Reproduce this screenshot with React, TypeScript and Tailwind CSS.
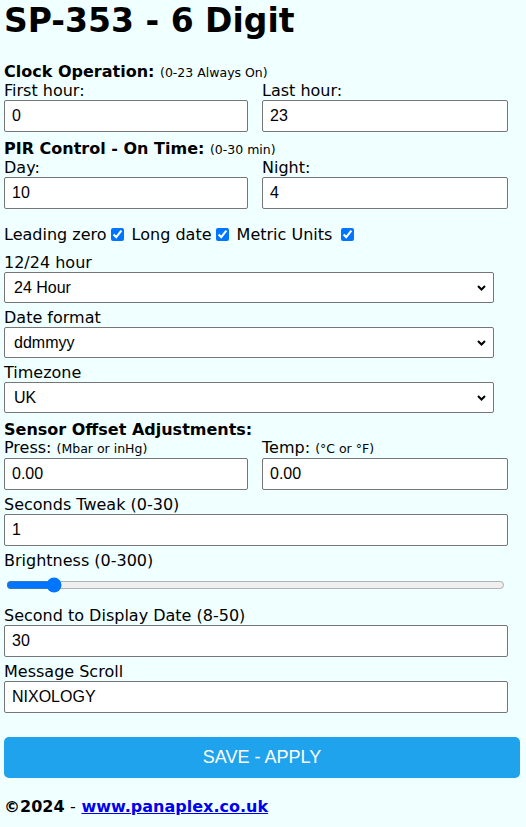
import React, { useState } from 'react';

const label = "block text-[16px] leading-[18px] text-black";
const heading = "block text-[16px] leading-[19px] font-bold text-black";
const small = "text-[12.5px] font-normal";
const inputCls =
  "block w-full h-[32px] border border-[#767676] rounded-[2px] bg-white px-[7px] text-[16px] text-black outline-none [font-family:'Liberation_Sans',Arial,sans-serif]";
const check = "m-[3px_3px_3px_4px] w-[13px] h-[13px] align-[-1px]";

const Field: React.FC<{ title: React.ReactNode; value: string; className?: string }> = ({ title, value, className }) => (
  <div className={className}>
    <label className={label}>{title}</label>
    <input type="text" defaultValue={value} className={inputCls} />
  </div>
);

const Select: React.FC<{ title: string; value: string; options: string[]; className?: string }> = ({ title, value, options, className }) => (
  <div className={className}>
    <label className={label}>{title}</label>
    <div className="relative w-[490px]">
      <select
        defaultValue={value}
        className="block w-full h-[31px] appearance-none border border-[#767676] rounded-[2px] bg-white pl-[9px] text-[16px] text-black outline-none [font-family:'Liberation_Sans',Arial,sans-serif]"
      >
        {options.map((o) => (
          <option key={o} value={o}>{o}</option>
        ))}
      </select>
      <svg className="absolute right-[8px] top-[13px] pointer-events-none" width="9" height="6" viewBox="0 0 9 6">
        <path d="M1 1 L4.5 4.5 L8 1" fill="none" stroke="#000" strokeWidth="2" />
      </svg>
    </div>
  </div>
);

export default function App() {
  const [brightness, setBrightness] = useState(25);

  return (
    <div className="min-h-[827px] bg-[#f0ffff] px-[4px] [font-family:'DejaVu_Sans',Verdana,sans-serif] text-black">
      <h1 className="pt-[2px] text-[33px] leading-[38px] font-bold">SP-353 - 6 Digit</h1>

      {/* Clock operation */}
      <div className="mt-[22px]">
        <div className={heading}>
          Clock Operation: <span className={small}>(0-23 Always On)</span>
        </div>
        <div className="grid grid-cols-[244px_246px] gap-x-[14px]">
          <Field title="First hour:" value="0" />
          <Field title="Last hour:" value="23" />
        </div>
      </div>

      {/* PIR */}
      <div className="mt-[7px]">
        <div className={heading}>
          PIR Control - On Time: <span className={small}>(0-30 min)</span>
        </div>
        <div className="grid grid-cols-[244px_246px] gap-x-[14px]">
          <Field title="Day:" value="10" />
          <Field title="Night:" value="4" />
        </div>
      </div>

      <div className="mt-[16px] text-[16px] leading-[19px]">
        Leading zero<input type="checkbox" defaultChecked className={check} /> Long date
        <input type="checkbox" defaultChecked className={check} /> Metric Units{' '}
        <input type="checkbox" defaultChecked className={check} />
      </div>

      <Select className="mt-[10px]" title="12/24 hour" value="24 Hour" options={['12 Hour', '24 Hour']} />
      <Select className="mt-[6px]" title="Date format" value="ddmmyy" options={['ddmmyy', 'mmddyy', 'yymmdd']} />
      <Select className="mt-[6px]" title="Timezone" value="UK" options={['UK', 'CET', 'EST', 'PST']} />

      {/* Sensor offsets */}
      <div className="mt-[7px]">
        <div className={heading}>Sensor Offset Adjustments:</div>
        <div className="grid grid-cols-[244px_246px] gap-x-[14px]">
          <Field title={<>Press: <span className={small}>(Mbar or inHg)</span></>} value="0.00" />
          <Field title={<>Temp: <span className={small}>(°C or °F)</span></>} value="0.00" />
        </div>
      </div>

      <Field className="mt-[6px] w-[504px]" title="Seconds Tweak (0-30)" value="1" />

      <div className="mt-[6px]">
        <label className={label}>Brightness (0-300)</label>
        <input
          type="range"
          min={0}
          max={300}
          value={brightness}
          onChange={(e) => setBrightness(Number(e.target.value))}
          className="block w-[499px] h-[16px] mt-[7px] ml-[2px]"
        />
      </div>

      <Field className="mt-[14px] w-[504px]" title="Second to Display Date (8-50)" value="30" />
      <Field className="mt-[6px] w-[504px]" title="Message Scroll" value="NIXOLOGY" />

      <button className="mt-[24px] block w-[516px] h-[41px] rounded-[5px] bg-[#1fa3ec] text-white text-[18px] [font-family:'Liberation_Sans',Arial,sans-serif]">
        SAVE - APPLY
      </button>

      <p className="mt-[19px] pb-[10px] text-[16px] leading-[19px] font-bold">
        ©2024 <span className="font-normal">-</span> <a href="#" className="text-[#0000ee] underline">www.panaplex.co.uk</a>
      </p>
    </div>
  );
}
